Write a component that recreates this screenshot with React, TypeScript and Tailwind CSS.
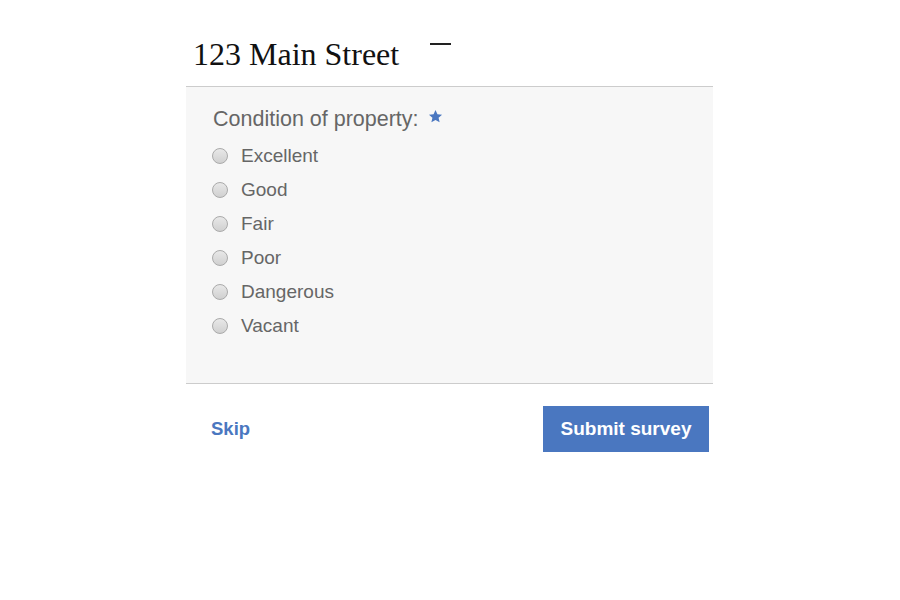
const options = ["Excellent", "Good", "Fair", "Poor", "Dangerous", "Vacant"];

function Star() {
  return (
    <svg width="15" height="15" viewBox="0 0 24 24" className="mt-[-6px]">
      <path
        d="M12 1.5l3.1 7 7.4.6-5.6 4.9 1.7 7.3L12 17.4l-6.6 3.9 1.7-7.3L1.5 9.1l7.4-.6z"
        fill="#4a77c0"
      />
    </svg>
  );
}

export default function App() {
  return (
    <div className="min-h-screen bg-white font-['Liberation_Sans',Arial,sans-serif]">
      <div className="ml-[186px] w-[527px]">
        <div className="flex h-[86px] items-start gap-[31px] pl-[7px] pt-[38px]">
          <h1 className="font-['Liberation_Serif',serif] text-[32px] leading-none text-[#111]">
            123 Main Street
          </h1>
          <div className="mt-[5px] h-[2px] w-[21px] bg-[#222]" />
        </div>

        <div className="h-[298px] border-y border-[#cccccc] bg-[#f7f7f7] pl-[26px] pt-[20px]">
          <div className="flex items-center gap-[9px] pl-px text-[21.5px] leading-[24px] text-[#666]">
            <span>Condition of property:</span>
            <Star />
          </div>
          <div className="mt-[8px]">
            {options.map((opt) => (
              <label key={opt} className="flex h-[34px] items-center gap-[13px]">
                <span className="h-[16px] w-[16px] rounded-full border border-[#aaaaaa] bg-linear-to-b from-[#e8e8e8] to-[#d0d0d0]" />
                <span className="text-[19px] text-[#666]">{opt}</span>
              </label>
            ))}
          </div>
        </div>

        <div className="flex items-center justify-between pl-[25px] pr-[4px] pt-[22px]">
          <a className="text-[18.5px] font-bold text-[#4a77c0]">Skip</a>
          <button className="h-[46px] w-[166px] bg-[#4a77c0] pt-px text-[19px] font-bold text-white">
            Submit survey
          </button>
        </div>
      </div>
    </div>
  );
}
